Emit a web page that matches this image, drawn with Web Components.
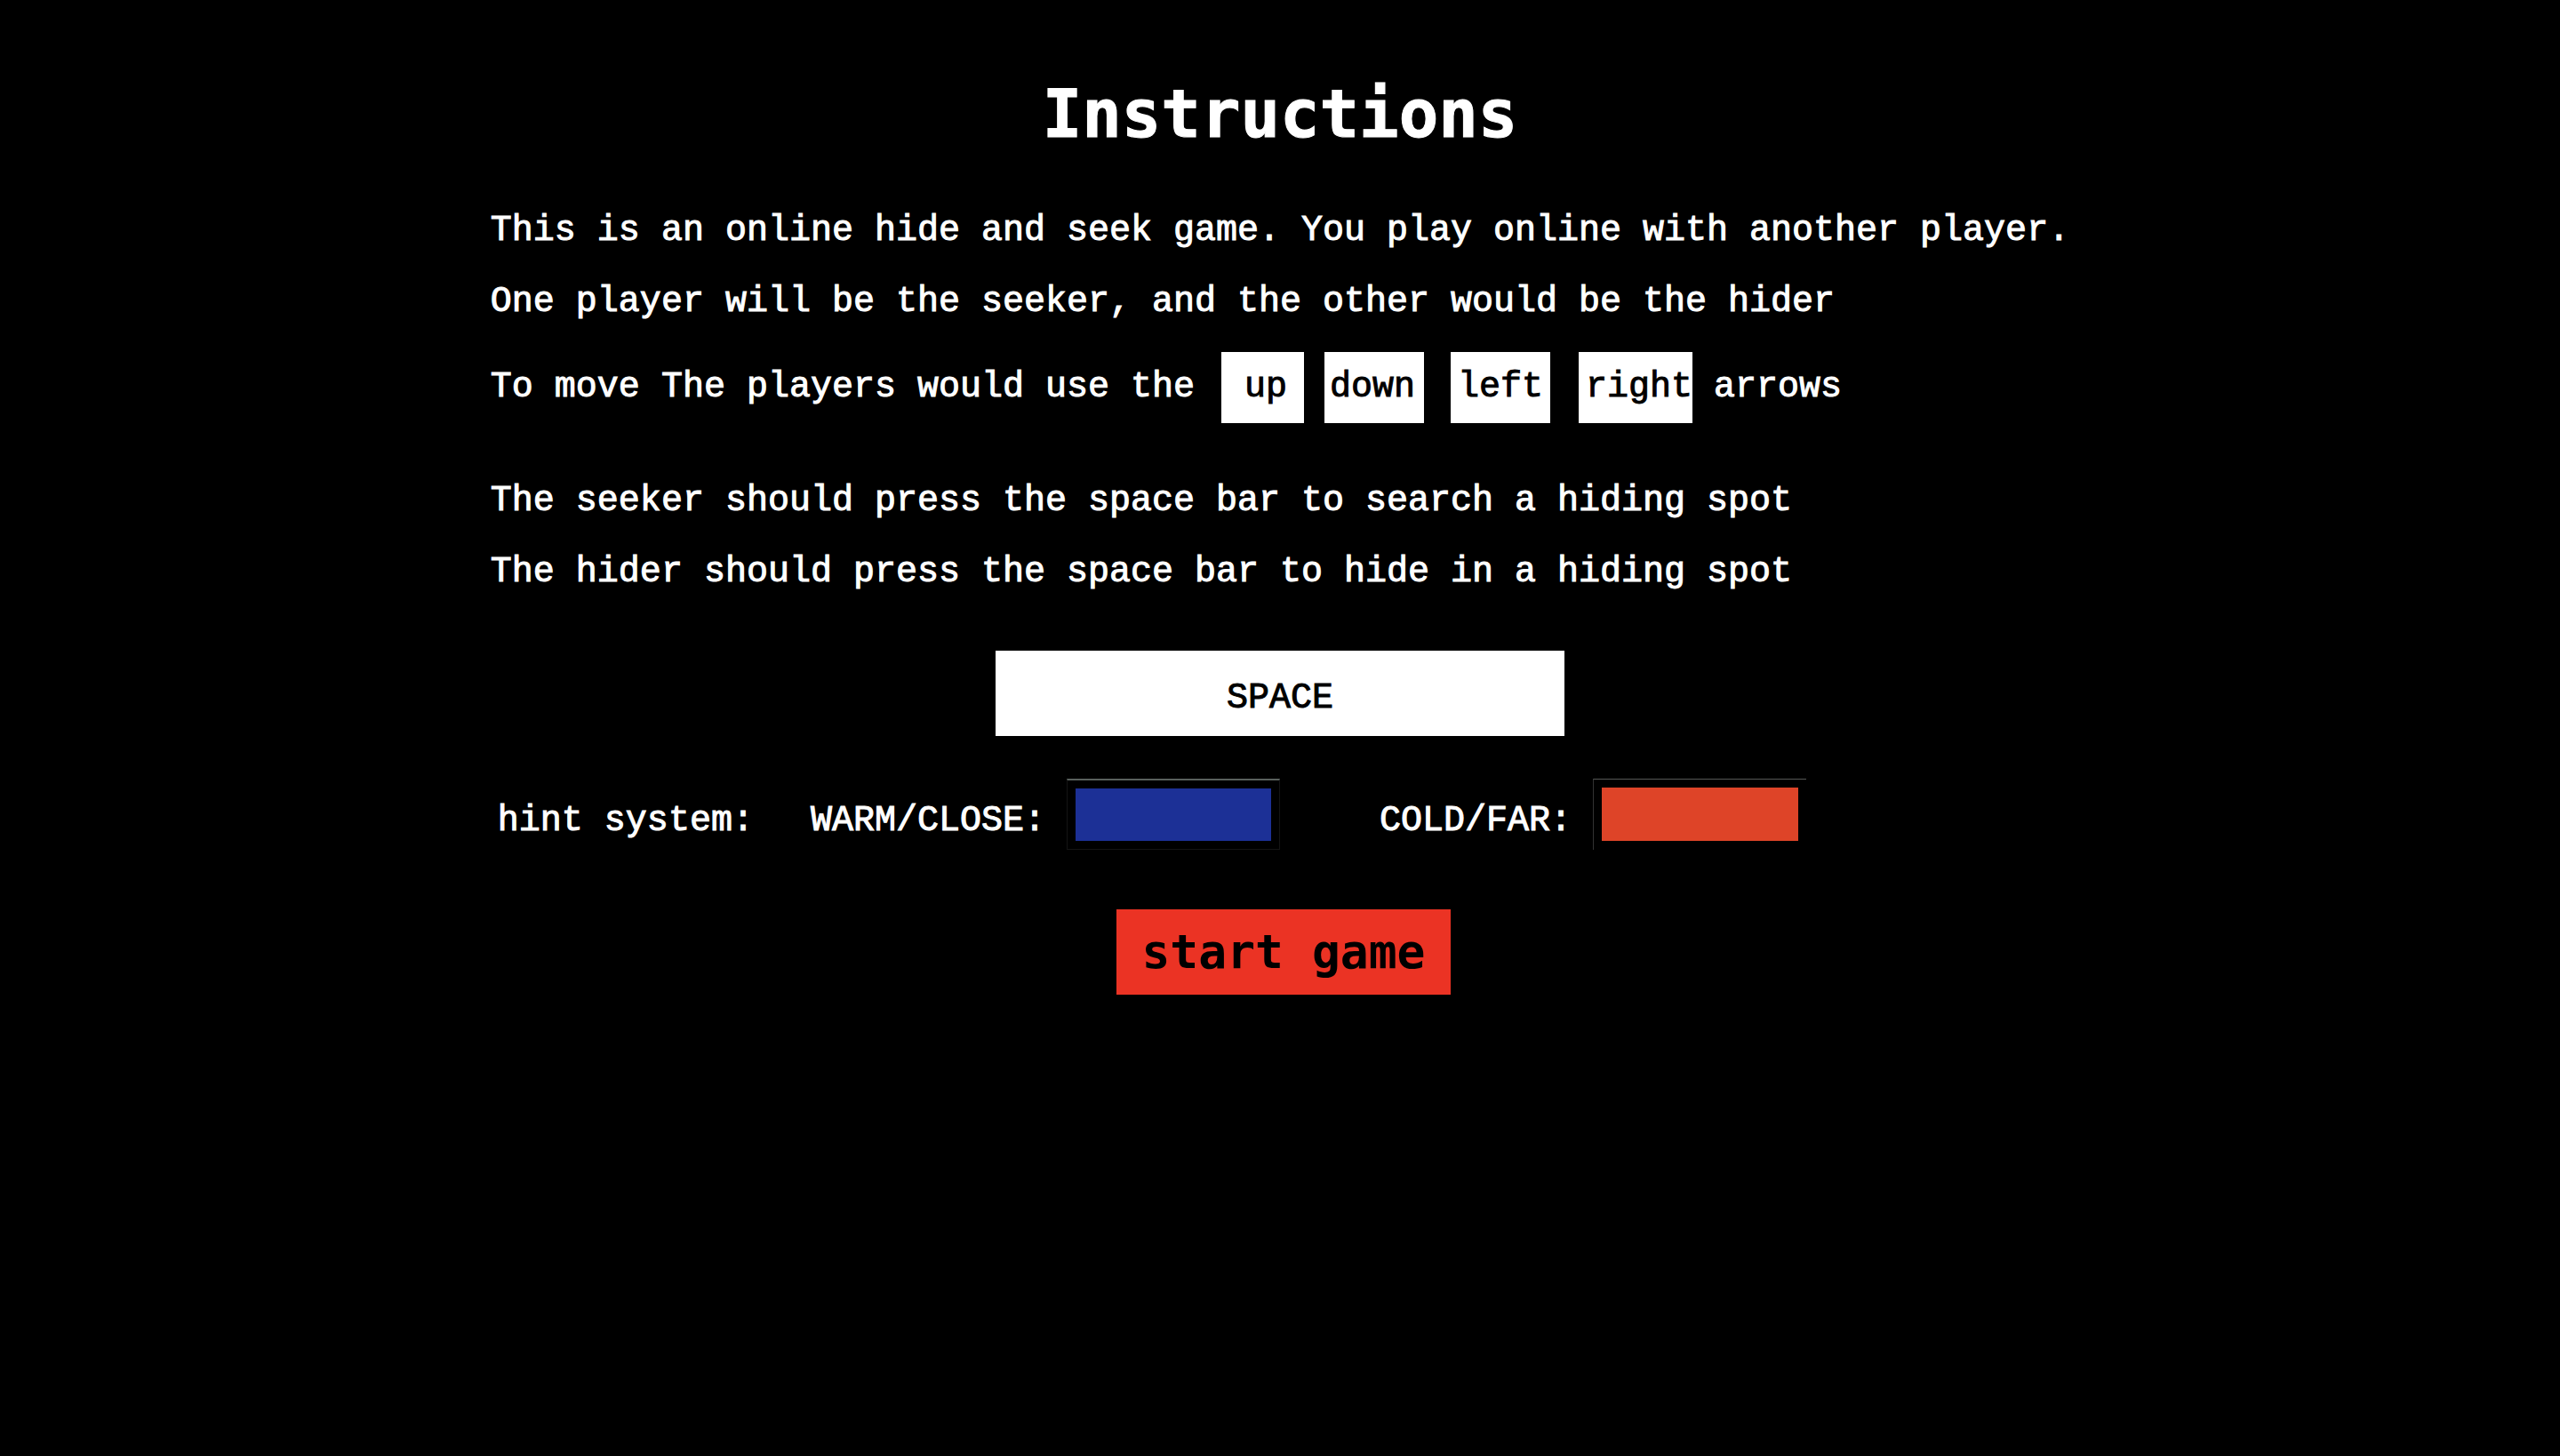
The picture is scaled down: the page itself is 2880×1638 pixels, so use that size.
<!DOCTYPE html>
<html lang="en">
<head>
<meta charset="utf-8">
<title>Instructions</title>
<style>
body { margin: 0; background: #000; }
</style>
</head>
<body>
<game-instructions></game-instructions>
<script>
const define = (name, html) => {
  const template = document.createElement('template');
  template.innerHTML = html;
  customElements.define(name, class extends HTMLElement {
    constructor() {
      super();
      this.attachShadow({ mode: 'open' }).append(template.content.cloneNode(true));
    }
  });
};

define('key-cap', `
<style>
  :host { display: block; box-sizing: border-box; height: 80px; padding: 0 8px; background: #fff; color: #000; -webkit-text-stroke: 1px #000; }
  :host([size="small"]) { padding: 0 19px 0 26px; }
  :host([size="medium"]) { padding: 0 10px 0 6px; }
  :host([size="flush"]) { padding-right: 0; }
  :host([size="bar"]) { width: 640px; height: 96px; padding: 14px 0 0; text-align: center; }
  kbd { font: inherit; }
</style>
<kbd><slot></slot></kbd>`);

define('hint-swatch', `
<style>
  :host { display: flex; align-items: flex-start; gap: 24px; }
  span { padding-top: 8px; }
  .frame { box-sizing: border-box; width: 240px; height: 80px; padding: 9px; border: 1px solid #141414; border-top: 2px solid #59605c; }
  :host([tone="far"]) .frame { border-width: 1px 0 0 1px; border-color: #555856 #000 #000 #333; padding: 9px 9px 10px; }
  .fill { height: 100%; background: var(--swatch); }
</style>
<span><slot></slot></span>
<div class="frame"><div class="fill"></div></div>`);

define('start-button', `
<style>
  :host { display: block; }
  button { display: block; height: 96px; padding: 0 28px; border: 0; background: #eb3324; color: #000; font: bold 53px/96px "DejaVu Sans Mono", monospace; cursor: pointer; }
</style>
<button type="button"><slot></slot></button>`);

define('game-instructions', `
<style>
  :host { display: block; color: #fff; font: 40px/80px "Liberation Mono", "Courier New", monospace; -webkit-text-stroke: 1px currentColor; }
  main { display: flex; flex-direction: column; width: fit-content; margin: 0 auto; padding-top: 72px; }
  h1 { margin: 0 0 36px; font: bold 74px/112px "DejaVu Sans Mono", monospace; text-align: center; }
  p { margin: 0; }
  .move { display: flex; margin: 16px 0 48px; }
  .move key-cap:nth-of-type(1) { margin-left: 30px; }
  .move key-cap:nth-of-type(2) { margin-left: 23px; }
  .move key-cap:nth-of-type(3) { margin-left: 30px; }
  .move key-cap:nth-of-type(4) { margin: 0 24px 0 32px; }
  .center { display: flex; justify-content: center; }
  .space { margin: 48px 0; }
  .hints { display: flex; height: 80px; padding-left: 8px; }
  .hints span { margin-right: 64px; padding-top: 8px; }
  .hints hint-swatch + hint-swatch { margin-left: 112px; }
  .start { margin-top: 67px; padding-left: 8px; -webkit-text-stroke: 0; }
</style>
<main>
  <h1>Instructions</h1>
  <p>This is an online hide and seek game. You play online with another player.</p>
  <p>One player will be the seeker, and the other would be the hider</p>
  <p class="move"><span>To move The players would use the</span><key-cap size="small">up</key-cap><key-cap size="medium">down</key-cap><key-cap>left</key-cap><key-cap size="flush">right</key-cap><span>arrows</span></p>
  <p>The seeker should press the space bar to search a hiding spot</p>
  <p>The hider should press the space bar to hide in a hiding spot</p>
  <div class="center space"><key-cap size="bar">SPACE</key-cap></div>
  <div class="hints"><span>hint system:</span><hint-swatch style="--swatch:#1c3096">WARM/CLOSE:</hint-swatch><hint-swatch tone="far" style="--swatch:#de4428">COLD/FAR:</hint-swatch></div>
  <div class="center start"><start-button>start game</start-button></div>
</main>`);
</script>
</body>
</html>
